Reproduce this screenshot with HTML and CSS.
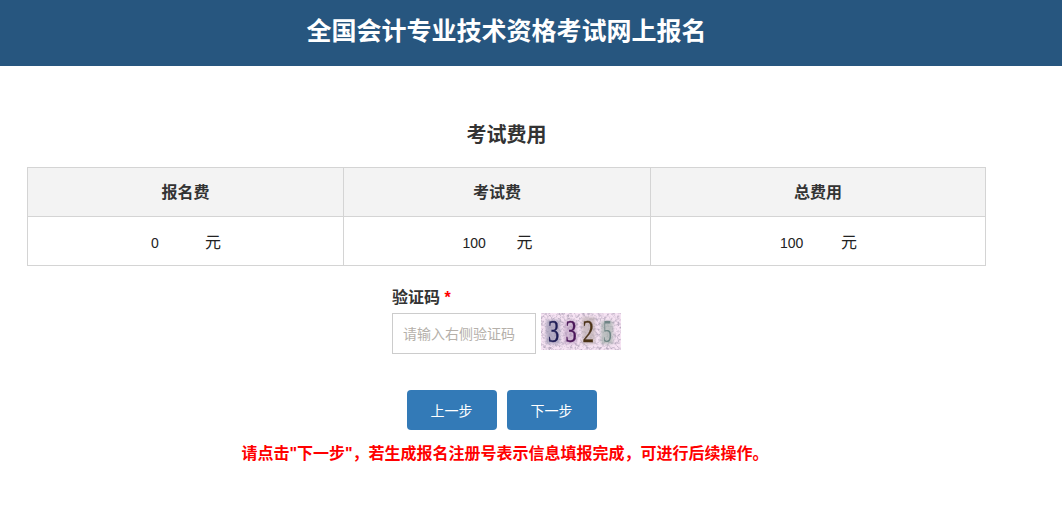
FILE: index.html
```html
<!DOCTYPE html>
<html lang="zh-CN">
<head>
    <meta charset="UTF-8">
    <meta name="viewport" content="width=device-width, initial-scale=1.0">
    <title>全国会计专业技术资格考试网上报名</title>
    <link rel="stylesheet" href="styles.css">
</head>
<body>
    <header class="page-header">
        <h1 class="page-title">全国会计专业技术资格考试网上报名</h1>
    </header>

    <main class="content">
        <h2 class="section-title">考试费用</h2>

        <table class="fee-table">
            <thead>
                <tr>
                    <th class="col-first">报名费</th>
                    <th class="col-second">考试费</th>
                    <th>总费用</th>
                </tr>
            </thead>
            <tbody>
                <tr>
                    <td><span class="amount">0</span><span class="unit">元</span></td>
                    <td><span class="amount">100</span><span class="unit">元</span></td>
                    <td><span class="amount amount-wide">100</span><span class="unit">元</span></td>
                </tr>
            </tbody>
        </table>

        <form class="captcha-form">
            <label class="captcha-label" for="captcha">验证码 <span class="required">*</span></label>
            <div class="captcha-row">
                <input type="text" id="captcha" class="captcha-input" placeholder="请输入右侧验证码">
                <svg class="captcha-image" width="80" height="37" viewBox="0 0 80 37" role="img" aria-label="验证码图片">
                    <defs>
                        <filter id="noise" x="0" y="0" width="100%" height="100%">
                            <feTurbulence type="fractalNoise" baseFrequency="0.38" numOctaves="3" seed="7"/>
                            <feColorMatrix type="matrix" values="0 0 0 0 0.5  0 0 0 0 0.42  0 0 0 0 0.54  3 0 0 0 -1.3"/>
                        </filter>
                        <filter id="soft"><feGaussianBlur stdDeviation="0.45"/></filter>
                        <filter id="haze"><feGaussianBlur stdDeviation="1.6"/></filter>
                    </defs>
                    <rect width="80" height="37" fill="#f6e3f3"/>
                    <rect width="80" height="37" filter="url(#noise)"/>
                    <g filter="url(#haze)">
                        <rect x="5" y="7" width="14" height="24" fill="#9d9ab4" opacity="0.75"/>
                        <rect x="23" y="8" width="13" height="23" fill="#b99cc0" opacity="0.6"/>
                        <rect x="41" y="4" width="13" height="27" fill="#bcaeb0" opacity="0.7"/>
                        <rect x="60" y="8" width="12" height="23" fill="#a9b4b0" opacity="0.75"/>
                    </g>
                    <g class="captcha-digits" filter="url(#soft)">
                        <text transform="translate(7 29) scale(0.7 1)" fill="#1f1d55" stroke="#1f1d55" stroke-width="0.4">3</text>
                        <text transform="translate(24.5 29) scale(0.7 1)" fill="#4a1558" stroke="#4a1558" stroke-width="0.4">3</text>
                        <text transform="translate(41.5 29) scale(0.72 1)" fill="#4c3219" stroke="#4c3219" stroke-width="0.4">2</text>
                        <text transform="translate(62 29) scale(0.55 1)" fill="#6f8585">5</text>
                    </g>
                </svg>
            </div>
        </form>

        <div class="actions">
            <button type="button" class="step-button">上一步</button>
            <button type="button" class="step-button">下一步</button>
        </div>

        <p class="notice">请点击"下一步"，若生成报名注册号表示信息填报完成，可进行后续操作。</p>
    </main>
</body>
</html>
```

FILE: styles.css
```css
body {
    margin: 0;
    padding: 0;
    background-color: #fff;
    color: #333;
    font-family: "Liberation Sans", "Noto Sans CJK SC", sans-serif;
}

.page-header {
    width: 1013px;
    height: 66px;
    padding-right: 49px;
    background-color: #27567f;
    text-align: center;
}

.page-title {
    margin: 0;
    color: #fff;
    font-size: 25px;
    font-weight: bold;
    line-height: 62px;
}

.content {
    width: 959px;
    padding: 0 27px;
}

.section-title {
    margin: 0;
    padding-top: 56px;
    height: 45px;
    font-size: 20px;
    font-weight: bold;
    line-height: 27px;
    text-align: center;
}

.fee-table {
    width: 959px;
    table-layout: fixed;
    border-collapse: collapse;
    font-size: 16px;
}

.fee-table th,
.fee-table td {
    height: 48px;
    padding: 0;
    border: 1px solid #d4d4d4;
    text-align: center;
    vertical-align: middle;
}

.fee-table th {
    height: 46px;
    padding-bottom: 2px;
    background-color: #f3f3f3;
    font-size: 16px;
    font-weight: bold;
}

.fee-table td {
    padding-left: 2px;
    color: #222;
}

.col-first {
    width: 315px;
}

.col-second {
    width: 306px;
}

.amount {
    display: inline-block;
    width: 54px;
    font-size: 14px;
    text-align: left;
}

.amount-wide {
    width: 61px;
}

.unit {
    display: inline-block;
    width: 17px;
    text-align: left;
}

.captcha-form {
    width: 240px;
    margin: 22px 0 0 365px;
}

.captcha-label {
    display: block;
    height: 25px;
    font-size: 16px;
    font-weight: bold;
    line-height: 20px;
}

.required {
    color: #f00;
}

.captcha-row {
    display: flex;
    align-items: flex-start;
    gap: 5px;
}

.captcha-input {
    width: 144px;
    height: 41px;
    padding: 0 10px;
    border: 1px solid #ccc;
    box-sizing: border-box;
    font-family: inherit;
    font-size: 14px;
}

.captcha-input::placeholder {
    color: #b5b0aa;
}

.captcha-image {
    display: block;
}

.captcha-digits {
    font-family: "Liberation Serif", serif;
    font-size: 32px;
}

.actions {
    display: flex;
    justify-content: center;
    gap: 10px;
    margin-top: 36px;
    padding-right: 10px;
}

.step-button {
    width: 90px;
    height: 40px;
    border: none;
    border-radius: 4px;
    background-color: #337ab7;
    color: #fff;
    font-family: inherit;
    font-size: 14px;
    cursor: pointer;
}

.notice {
    margin: 13px 0 0;
    padding-right: 3px;
    color: #f00;
    font-size: 16px;
    font-weight: bold;
    line-height: 22px;
    text-align: center;
}
```
